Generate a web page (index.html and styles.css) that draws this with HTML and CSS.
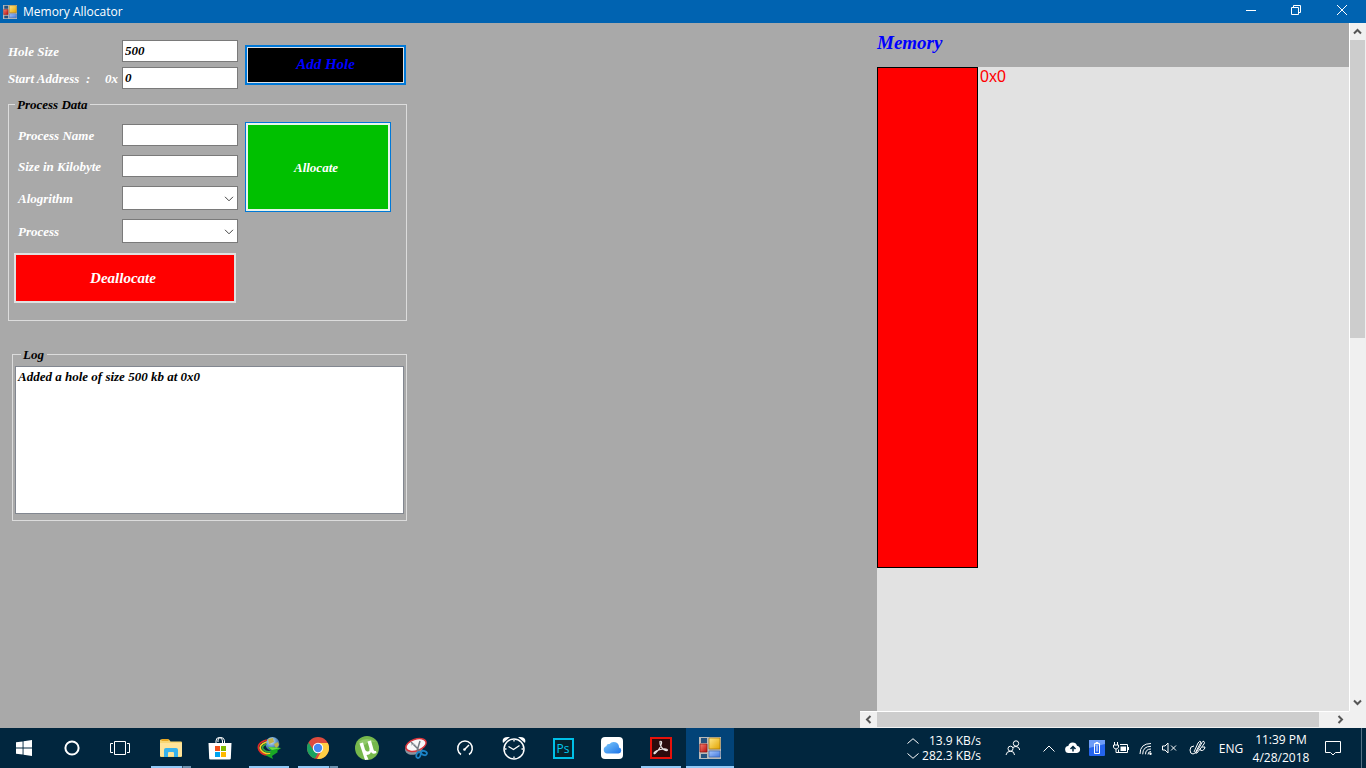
FILE: index.html
```html
<!DOCTYPE html>
<html lang="en">
<head>
<meta charset="utf-8">
<title>Memory Allocator</title>
<link rel="stylesheet" href="styles.css">
</head>
<body>
<svg class="defs" aria-hidden="true">
  <defs>
    <linearGradient id="gold" x1="0" y1="0" x2="1" y2="1"><stop offset="0" stop-color="#ffe88a"/><stop offset="1" stop-color="#e2a400"/></linearGradient>
    <linearGradient id="blue" x1="0" y1="0" x2="1" y2="1"><stop offset="0" stop-color="#a9c8ff"/><stop offset="1" stop-color="#3f76dc"/></linearGradient>
    <linearGradient id="red" x1="0" y1="0" x2="1" y2="1"><stop offset="0" stop-color="#f58070"/><stop offset="1" stop-color="#b80d0d"/></linearGradient>
    <linearGradient id="cloud" x1="0" y1="0" x2="1" y2="1"><stop offset="0" stop-color="#7cc9fb"/><stop offset="1" stop-color="#1d73e8"/></linearGradient>
    <radialGradient id="globe" cx=".4" cy=".3" r=".7"><stop offset="0" stop-color="#e4f0f8"/><stop offset=".5" stop-color="#6a9fd0"/><stop offset="1" stop-color="#254f8b"/></radialGradient>
    <symbol id="winform" viewBox="0 0 22 22">
      <path d="M0 0h22v22H0z" fill="#b9b9b9"/>
      <path d="M2 1h6v5H2zM2 17h6v4H2z" fill="#24527e"/>
      <path d="M10 1h11v11H10z" fill="url(#gold)" stroke="#a27308" stroke-width=".7"/>
      <path d="M1 7h7v8H1z" fill="url(#red)" stroke="#8e1210" stroke-width=".7"/>
      <path d="M10 14h11v6H10z" fill="url(#blue)" stroke="#3c66ae" stroke-width=".7"/>
    </symbol>
  </defs>
</svg>
<div class="window">
  <header class="titlebar">
    <svg class="title-icon" viewBox="0 0 22 22"><use href="#winform"/></svg>
    <h1 class="title">Memory Allocator</h1>
    <div class="caption-buttons">
      <button type="button" aria-label="Minimize"><svg width="12" height="12" viewBox="0 0 12 12"><path d="M1 6.500h10" /></svg></button>
      <button type="button" aria-label="Restore"><svg width="12" height="12" viewBox="0 0 12 12"><path d="M1.500 3.500h7v7h-7zM3.500 3.500v-2h7v7h-2"/></svg></button>
      <button type="button" aria-label="Close"><svg width="12" height="12" viewBox="0 0 12 12"><path d="M1 1l10 10M11 1L1 11"/></svg></button>
    </div>
  </header>

  <main class="client">
    <div class="controls">
      <form class="hole-form">
        <div class="rows top-rows">
          <label class="field-label" for="hole-size">Hole Size</label>
          <input class="text-box" id="hole-size" type="text" value="500">
          <label class="field-label" for="start"><span>Start Address&nbsp; :</span><span>0x</span></label>
          <input class="text-box" id="start" type="text" value="0">
        </div>
        <button type="button" class="add-hole">Add Hole</button>
      </form>

      <fieldset class="group process-group">
        <legend>Process Data</legend>
        <div class="process-form">
          <div class="rows">
            <label class="field-label" for="pname">Process Name</label>
            <input class="text-box" id="pname" type="text">
            <label class="field-label" for="psize">Size in Kilobyte</label>
            <input class="text-box" id="psize" type="text">
            <label class="field-label" for="algo">Alogrithm</label>
            <div class="combo"><select id="algo"><option></option></select><svg width="10" height="6" viewBox="0 0 10 6"><path d="M1 .8l4 4 4-4"/></svg></div>
            <label class="field-label" for="proc">Process</label>
            <div class="combo"><select id="proc"><option></option></select><svg width="10" height="6" viewBox="0 0 10 6"><path d="M1 .8l4 4 4-4"/></svg></div>
          </div>
          <button type="button" class="allocate">Allocate</button>
        </div>
        <button type="button" class="deallocate">Deallocate</button>
      </fieldset>

      <fieldset class="group log-group">
        <legend>Log</legend>
        <ul class="log"><li>Added a hole of size 500 kb at 0x0</li></ul>
      </fieldset>
    </div>

    <section class="memory">
      <div class="memory-view">
        <h2 class="memory-title">Memory</h2>
        <div class="canvas">
          <div class="block" style="height:501px"></div>
          <span class="address">0x0</span>
        </div>
      </div>
      <div class="scroll vertical">
        <button type="button" aria-label="Scroll up"><svg width="9" height="7" viewBox="0 0 9 7"><path d="M1 5.500l3.500-3.500L8 5.500"/></svg></button>
        <div class="track"><div class="thumb"></div></div>
        <button type="button" aria-label="Scroll down"><svg width="9" height="7" viewBox="0 0 9 7"><path d="M1 1.500L4.500 5 8 1.500"/></svg></button>
      </div>
      <div class="scroll horizontal">
        <button type="button" aria-label="Scroll left"><svg width="7" height="9" viewBox="0 0 7 9"><path d="M5.500 1L2 4.500 5.500 8"/></svg></button>
        <div class="track"><div class="thumb"></div></div>
        <button type="button" aria-label="Scroll right"><svg width="7" height="9" viewBox="0 0 7 9"><path d="M1.500 1L5 4.500 1.500 8"/></svg></button>
      </div>
      <div class="corner"></div>
    </section>
  </main>
</div>

<footer class="taskbar">
  <div class="system">
    <button type="button" class="task" aria-label="Start"><svg width="16" height="16" viewBox="0 0 16 16" fill="#fff"><path d="M0 2.300L6.600 1.400v6.100H0zM7.500 1.200L16 0v7.500H7.500zM0 8.400h6.600v6.200L0 13.700zM7.500 8.400H16V16l-8.500-1.200z"/></svg></button>
    <button type="button" class="task" aria-label="Cortana"><svg width="16" height="16" viewBox="0 0 16 16"><circle cx="8" cy="8" r="6.600" fill="none" stroke="#fff" stroke-width="2"/></svg></button>
    <button type="button" class="task" aria-label="Task view"><svg class="line" width="20" height="16" viewBox="0 0 20 16"><path d="M4.500 1.500h11v13h-11zM3 3.500H.5v9H3M17 3.500h2.500v9H17"/></svg></button>
  </div>
  <div class="apps">
    <button type="button" class="task open multi" aria-label="File Explorer"><svg width="24" height="20" viewBox="0 0 24 20"><path d="M2 1.500h8l1.500 2H22q1 0 1 1V18q0 1-1 1H2q-1 0-1-1V2.500q0-1 1-1z" fill="#f8d775"/><path d="M2.500 1h7v2h-7z" fill="#e9a823"/><path d="M1 5h22v13H1z" fill="#ffe49a"/><path d="M5 19v-7q0-2 2-2h10q2 0 2 2v7h-4v-4q0-1-1-1h-4q-1 0-1 1v4z" fill="#37b2ec"/></svg></button>
    <button type="button" class="task" aria-label="Store"><svg width="24" height="24" viewBox="0 0 24 24"><path d="M8 8V5q0-3.500 3.200-3.500T14.500 5v3M10 6V4q0-2.500 3-2.500t3.500 3V7" fill="none" stroke="#fff"/><path d="M.5 7h23l-.7 15.500q0 1-1.300 1h-19q-1.300 0-1.300-1z" fill="#fff"/><path d="M7 10h5v5H7z" fill="#f2511b"/><path d="M13 10h5v5h-5z" fill="#7fbb00"/><path d="M7 16h5v5H7z" fill="#00a4ef"/><path d="M13 16h5v5h-5z" fill="#ffb900"/></svg></button>
    <button type="button" class="task open" aria-label="Download Manager"><svg width="24" height="24" viewBox="0 0 24 24"><circle cx="15.500" cy="8" r="7" fill="url(#globe)"/><path d="M11 3l5-1 1 4-5 2zM17 8l4-2 1 3-3 4z" fill="#bfb04a"/><g fill="none" stroke-width="1.700"><path d="M10 4Q-1 7 2 14q4 7 14 4" stroke="#e12a25"/><path d="M9.500 6Q1 9 4 14q4 5 11 3" stroke="#f3cf23"/><path d="M9.500 8Q4 10 6 13q3 4 9 2.500" stroke="#32a83c"/></g><path d="M11 11l13 1-4 3 1 1-6 4 1 3L8 19l5-1 1-3z" fill="#19a824"/><path d="M11 11l13 1-9 2z" fill="#69de44"/></svg></button>
    <button type="button" class="task open multi" aria-label="Chrome"><svg width="22" height="22" viewBox="0 0 22 22"><circle cx="11" cy="11" r="11" fill="#dd4b3e"/><path d="M1.500 5.500L7 14l4 2-3 5.600A11 11 0 0 1 1.500 5.500z" fill="#1aa260"/><path d="M11 6h9.800A11 11 0 0 1 10 22l5-8.500z" fill="#ffce44"/><circle cx="11" cy="11" r="5.200" fill="#fff"/><circle cx="11" cy="11" r="4.200" fill="#4688f4"/></svg></button>
    <button type="button" class="task" aria-label="Torrent client"><svg width="24" height="24" viewBox="0 0 24 24"><circle cx="12" cy="12" r="12" fill="#76b84c"/><path d="M3 6q9-6 18 0-7-2-11 3z" fill="#90ca69"/><path d="M4.500 7.500l3.500-1 2 7q1 2.500 3 2t1.500-3l-2-7 3.500-1 2.500 9q.5 2 2.500 1.500l.5 2q-4 2-5.500-1-1 3-4.500 3l2 4.500-3.500.5z" fill="#fff"/></svg></button>
    <button type="button" class="task" aria-label="Snipping Tool"><svg width="26" height="22" viewBox="0 0 26 22"><ellipse cx="11" cy="12" rx="9" ry="5.500" transform="rotate(-12 11 12)" fill="#8b949e"/><ellipse cx="13" cy="8" rx="10.500" ry="5.800" transform="rotate(-18 13 8)" fill="#f7f8f9" stroke="#d9343b" stroke-width="1.500"/><path d="M8 5l9 9M17 4l-3 10" stroke="#737b83" stroke-width="1.500"/><path d="M8 8q4-2 5 1" fill="none" stroke="#a9b0b6"/><g fill="none" stroke="#1c83c6" stroke-width="1.800"><ellipse cx="15.500" cy="18" rx="2" ry="3" transform="rotate(20 15.500 18)"/><ellipse cx="21" cy="16" rx="3" ry="2" transform="rotate(20 21 16)"/></g></svg></button>
    <button type="button" class="task" aria-label="Gauge"><svg class="line" width="18" height="18" viewBox="0 0 18 18"><path d="M5 15.500A7.300 7.300 0 1 1 13 15.500M9 10l4-4" stroke-width="1.500"/><circle cx="8.500" cy="10.500" r="1.300" fill="#fff" stroke="none"/></svg></button>
    <button type="button" class="task" aria-label="Alarms"><svg width="24" height="24" viewBox="0 0 24 24"><path d="M1 7Q-1 0 8 1zM23 7q2-7-7-6z" fill="#fff"/><circle cx="12" cy="13" r="10" fill="#01263e" stroke="#fff" stroke-width="1.500"/><path d="M6.500 10.500l5 3 6-4M12 4v1.500M12 20.500V22M3 13h1.500M19.500 13H21" fill="none" stroke="#fff" stroke-width="1.300"/></svg></button>
    <button type="button" class="task" aria-label="Photoshop"><span class="ps">Ps</span></button>
    <button type="button" class="task" aria-label="iCloud"><svg width="22" height="22" viewBox="0 0 22 22"><rect width="22" height="22" rx="4" fill="#fff"/><path d="M6 16.500a3.700 3.700 0 0 1-.7-7.200 2.700 2.700 0 0 1 3.200-2.200 5.300 5.300 0 0 1 9.500 3.500 3 3 0 0 1-.5 5.900z" fill="url(#cloud)"/></svg></button>
    <button type="button" class="task open" aria-label="Acrobat Reader"><svg width="22" height="22" viewBox="0 0 22 22"><rect x="1" y="1" width="20" height="20" fill="#2b0b0d" stroke="#e6120b" stroke-width="2"/><path d="M10 4.500q2-1 1.500 2-1 5-6.500 10-1 .5-1-.5 1-2.500 9-4 4-.5 4.500 1-.5 1.500-3.500-.2Q9.500 9.500 10 4.500z" fill="none" stroke="#e9e5e5" stroke-width="1.200"/></svg></button>
    <button type="button" class="task open active" aria-label="Memory Allocator"><svg width="22" height="22" viewBox="0 0 22 22"><use href="#winform"/></svg></button>
  </div>
  <div class="tray">
    <div class="speed">
      <svg class="line" width="12" height="6" viewBox="0 0 12 6"><path d="M.5 5.500L6 .7l5.500 4.800"/></svg><span>13.9 KB/s</span>
      <svg class="line" width="12" height="6" viewBox="0 0 12 6"><path d="M.5.500L6 5.300 11.500.5"/></svg><span>282.3 KB/s</span>
    </div>
    <span class="cell wide"><svg class="line" width="16" height="16" viewBox="0 0 16 16"><circle cx="11" cy="3.500" r="2.700"/><circle cx="5.500" cy="8.700" r="2.500"/><path d="M1 15q.5-3.800 4.500-3.800T9.500 15M8 7.500q2-1.500 4-.8 2.500.8 2.700 3.300"/></svg></span>
    <span class="cell"><svg class="line" width="12" height="7" viewBox="0 0 12 7"><path d="M.5 6.500L6 1l5.500 5.500"/></svg></span>
    <span class="cell"><svg width="16" height="12" viewBox="0 0 16 12"><path d="M4 11a3.500 3.500 0 0 1-.7-7A4.500 4.500 0 0 1 12 3.700 3.700 3.700 0 0 1 12 11z" fill="#fff"/><path d="M8 9.500V5M5.500 7L8 4.500 10.500 7" fill="none" stroke="#01263e" stroke-width="1.500"/></svg></span>
    <span class="cell"><svg width="16" height="16" viewBox="0 0 16 16"><rect width="16" height="16" rx="1" fill="#2464ed"/><path d="M0 0h16v4L0 8z" fill="#6d9cf7"/><path d="M5.500 3.500h5v10h-5zM7 3.500v-1h2v1M8 5.500v6" fill="none" stroke="#fff"/></svg></span>
    <span class="cell"><svg class="line" width="16" height="14" viewBox="0 0 16 14"><path d="M1.500 1v3M4.500 1v3M.5 4h5v2q-.5 2-2.500 2T.5 6zM3 8v3.500h3M7 3.500h7.500v8H5.500v-3M15.500 6v3"/><path d="M7.500 5.500H13V10H7.500z" fill="#fff" stroke="none"/></svg></span>
    <span class="cell"><svg class="line" width="13" height="13" viewBox="0 0 13 13"><path d="M1 12Q1 1.500 12 1.500M3.700 12.300q0-8 8.300-8M6.500 12.300Q6.500 7 12 7M9 12.500q0-3 3-3"/><circle cx="11.500" cy="11.700" r="1.200" fill="#fff" stroke="none"/></svg></span>
    <span class="cell"><svg class="line" width="15" height="12" viewBox="0 0 15 12"><path d="M.5 4H3l3-3v10L3 8H.5zM9 3.500l5 5M14 3.500l-5 5"/></svg></span>
    <span class="cell mid"><svg class="line" width="17" height="16" viewBox="0 0 17 16"><path d="M5 6q-4 0-4 4t3 4q3 0 6-6l3-5.500q1-2 2-1t0 2.500l-7 9q-2 1-1-1.500L12 2q-1-2-3 1L5 12M11 9q0 2 2.500 1.500Q16 9.500 16 7h-3"/></svg></span>
    <span class="cell lang">ENG</span>
    <time class="clock" datetime="2018-04-28T23:39"><span>11:39 PM</span><span>4/28/2018</span></time>
    <span class="cell action"><svg class="line" width="16" height="15" viewBox="0 0 16 15"><path d="M.5.500h15v11h-5L8 14l-2.500-2.500h-5z"/></svg></span>
    <span class="peek"></span>
  </div>
</footer>
</body>
</html>
```
FILE: styles.css
```css
* { box-sizing: border-box; }
body {
  margin: 0;
  min-height: 100vh;
  display: flex;
  flex-direction: column;
  font-family: "Liberation Serif", "Times New Roman", serif;
  font-size: 13px;
  line-height: 15px;
  background: #a9a9a9;
}
button, input, select { font: inherit; margin: 0; padding: 0; border-radius: 0; }
button { border: 0; background: none; color: inherit; }
.defs { position: absolute; width: 0; height: 0; }
.window { flex: 1; display: flex; flex-direction: column; }

.titlebar {
  height: 23px;
  display: flex;
  align-items: center;
  padding-left: 3px;
  gap: 6px;
  background: #0063b1;
  color: #fff;
  font-family: "Open Sans", "Noto Sans", sans-serif;
}
.title-icon { width: 14px; height: 14px; }
.title { margin: 0; font-size: 12px; font-weight: 400; }
.caption-buttons { margin-left: auto; display: flex; padding-bottom: 3px; }
.caption-buttons button { width: 45px; height: 20px; display: grid; place-items: center; }
.caption-buttons button:last-child { width: 48px; }
.caption-buttons path { fill: none; stroke: #fff; stroke-width: 1; }

.client { flex: 1; display: grid; grid-template-columns: 1fr 506px; }
.controls { width: 407px; padding: 17px 0 0 8px; font-weight: 700; font-style: italic; }
.hole-form { display: flex; align-items: center; gap: 7px; padding-right: 1px; }
.rows { display: grid; grid-template-columns: 113px 116px; row-gap: 9px; align-items: center; }
.top-rows { grid-template-columns: 114px 116px; row-gap: 5px; }
.field-label { display: flex; justify-content: space-between; padding-right: 4px; color: #fff; }
.process-group .field-label { padding-left: 9px; }
.text-box, .combo select { width: 100%; background: #fff; color: #000; border: 1px solid #7a7a7a; font-weight: 700; font-style: italic; }
.text-box { height: 22px; padding: 0 2px; }
.combo { position: relative; height: 24px; }
.combo select { height: 100%; appearance: none; }
.combo svg { position: absolute; right: 4px; top: 10px; fill: none; stroke: #444; stroke-width: 1; pointer-events: none; }

.add-hole {
  flex: 1;
  height: 40px;
  background: #000;
  color: #00f;
  border: 2px solid #0078d7;
  box-shadow: inset 0 0 0 1px #e1e1e1;
  font-size: 15px;
}
.group { min-width: 0; margin: 0; padding: 0; border: 1px solid #dcdcdc; }
.group legend { height: 15px; margin-left: 6px; padding: 0 3px 0 2px; color: #000; }
.process-group { margin-top: 8px; padding: 12px 0 17px; }
.process-form { display: flex; align-items: flex-start; gap: 7px; }
.allocate {
  width: 146px;
  height: 90px;
  margin-top: -2px;
  background: #00c000;
  color: #fff;
  border: 1px solid #0078d7;
  box-shadow: inset 0 0 0 2px #e8f4ec;
  padding-right: 4px;
}
.deallocate {
  width: 222px;
  height: 50px;
  margin: 10px 0 0 5px;
  background: #f00;
  color: #fff;
  border: 2px solid #e1e1e1;
  font-size: 15px;
  display: block;
  padding-right: 4px;
}
.log-group { margin: 26px 0 0 4px; padding: 4px 2px 6px; }
.log { height: 148px; margin: 0; padding: 2px; list-style: none; background: #fff; border: 1px solid #828790; }

.memory { display: grid; grid-template-columns: 1fr 17px; grid-template-rows: 1fr 17px; }
.memory-view { padding-left: 17px; display: flex; flex-direction: column; }
.memory-title { height: 44px; margin: 0; line-height: 40px; font-size: 19px; font-style: italic; color: #00f; }
.canvas { flex: 1; display: flex; gap: 2px; background: #e2e2e2; }
.block { width: 101px; background: #f00; border: 1px solid #000; }
.address { color: #f00; font-family: "Liberation Sans", Arial, sans-serif; font-size: 16px; line-height: 20px; }

.scroll { display: flex; background: #f0f0f0; }
.scroll button { width: 17px; height: 17px; display: grid; place-items: center; flex: none; }
.scroll path { fill: none; stroke: #555; stroke-width: 2; }
.track { flex: 1; }
.thumb { background: #cdcdcd; }
.vertical { flex-direction: column; box-shadow: inset 1px 0 0 #fff; }
.vertical .thumb { height: 298px; margin: 0 1px; }
.horizontal { box-shadow: inset 0 1px 0 #fff; }
.horizontal .track { display: flex; padding: 1px 0; }
.horizontal .thumb { width: 442px; }
.corner { background: #f0f0f0; }

.taskbar {
  height: 40px;
  display: flex;
  background: #01263e;
  color: #fff;
  font-family: "Open Sans", "Noto Sans", sans-serif;
  font-size: 12px;
}
.line { fill: none; stroke: #fff; stroke-width: 1; }
.system { display: flex; }
.apps { display: flex; gap: 1px; margin-left: 3px; }
.task { position: relative; width: 48px; height: 40px; display: grid; place-items: center; }
.task.open::after { content: ""; position: absolute; left: 4px; right: 4px; bottom: 0; height: 2px; background: #91c9f7; }
.task.multi::after { background: linear-gradient(to right, #91c9f7 31px, #35566e 31px, #35566e 32px, #6c92b0 32px); }
.task.active { background: #024378; }
.task.active::after { left: 0; right: 0; }
.ps {
  width: 21px;
  height: 21px;
  border: 2px solid #00c0e8;
  background: #06222e;
  color: #00c8f0;
  line-height: 17px;
  text-align: center;
}
.tray { margin-left: auto; display: flex; align-items: stretch; }
.speed { display: grid; grid-template-columns: 12px 62px; align-content: center; align-items: center; margin-right: 8px; text-align: right; }
.cell { width: 24px; display: grid; place-items: center; }
.cell.wide { width: 48px; }
.cell.mid { width: 32px; }
.cell.lang { width: 36px; }
.cell.action { width: 40px; margin-right: 8px; }
.clock { width: 64px; display: grid; align-content: center; row-gap: 3px; text-align: center; }
.peek { width: 5px; border-left: 1px solid #557084; }
```
